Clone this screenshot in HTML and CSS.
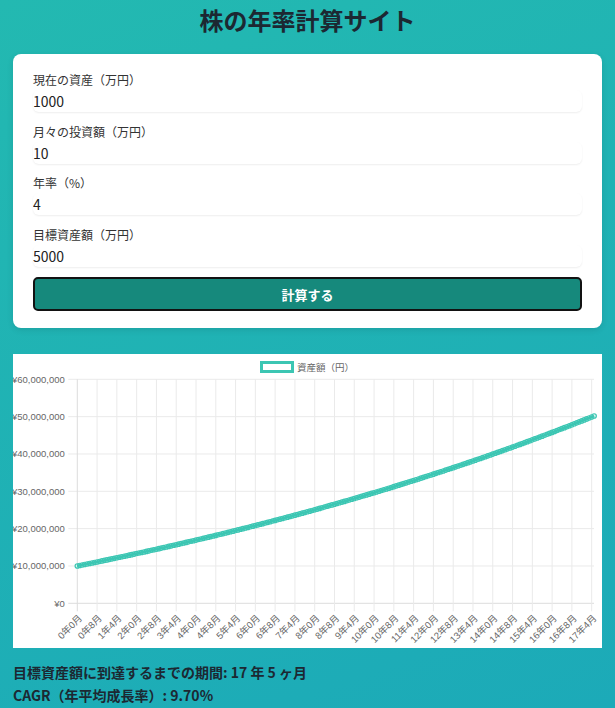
FILE: index.html
```html
<!DOCTYPE html>
<html lang="ja">
<head>
    <meta charset="UTF-8">
    <meta name="viewport" content="width=device-width, initial-scale=1.0">
    <title>株の年率計算サイト</title>
    <link rel="stylesheet" href="styles.css">
</head>
<body>
    <div class="page">
        <h1>株の年率計算サイト</h1>

        <form class="calc-card" id="calcForm">
            <div class="form-group">
                <label for="current">現在の資産（万円）</label>
                <input type="number" id="current" value="1000">
            </div>
            <div class="form-group">
                <label for="monthly">月々の投資額（万円）</label>
                <input type="number" id="monthly" value="10">
            </div>
            <div class="form-group">
                <label for="rate">年率（%）</label>
                <input type="number" id="rate" value="4">
            </div>
            <div class="form-group">
                <label for="target">目標資産額（万円）</label>
                <input type="number" id="target" value="5000">
            </div>
            <button type="submit" class="calc-button">計算する</button>
        </form>

        <div class="chart-box">
            <svg id="chart" width="589" height="294" viewBox="0 0 589 294"></svg>
        </div>

        <div class="result">
            <p id="period">目標資産額に到達するまでの期間: 17 年 5 ヶ月</p>
            <p id="cagr">CAGR（年平均成長率）: 9.70%</p>
        </div>
    </div>

    <script>
        document.addEventListener('DOMContentLoaded', function() {
            const svg = document.getElementById('chart');
            const NS = 'http://www.w3.org/2000/svg';

            // chart geometry
            const left = 64.3;
            const top = 25.3;
            const bottom = 249.3;
            const right = 581;
            const stepX = 2.473;
            const perTenMillion = 37.33;
            const lineColor = '#3cc6b3';

            function el(name, attrs, text) {
                const node = document.createElementNS(NS, name);
                for (const key in attrs) node.setAttribute(key, attrs[key]);
                if (text) node.textContent = text;
                svg.appendChild(node);
                return node;
            }

            // data: monthly compounding
            const values = [];
            let v = 10000000;
            const target = 50000000;
            while (true) {
                values.push(v);
                if (v >= target) break;
                v = v * (1 + 0.04 / 12) + 100000;
            }

            const yOf = val => bottom - val / 10000000 * perTenMillion;
            const xOf = m => left + m * stepX;

            // horizontal grid + y labels
            for (let i = 0; i <= 6; i++) {
                const y = bottom - i * perTenMillion;
                el('line', { x1: left - 9, x2: right, y1: y, y2: y, class: i === 0 ? 'axis' : 'grid' });
                const label = i === 0 ? '¥0' : '¥' + (i * 10000000).toLocaleString('en-US');
                el('text', { x: left - 12.5, y: y, class: 'tick', 'text-anchor': 'end', 'dominant-baseline': 'central' }, label);
            }

            // vertical grid + rotated x labels
            for (let m = 0; m < values.length; m += 8) {
                const x = xOf(m);
                el('line', { x1: x, x2: x, y1: top, y2: bottom + 8, class: m === 0 ? 'axis' : 'grid' });
                const label = Math.floor(m / 12) + '年' + (m % 12) + '月';
                el('text', {
                    class: 'tick',
                    'text-anchor': 'end',
                    'dominant-baseline': 'central',
                    transform: 'translate(' + (x + 3) + ',' + (bottom + 13) + ') rotate(-45)'
                }, label);
            }

            // legend
            el('rect', { x: 248.5, y: 8.5, width: 31, height: 9, fill: '#fff', stroke: lineColor, 'stroke-width': 3 });
            el('text', { x: 284, y: 13, class: 'legend', 'dominant-baseline': 'central' }, '資産額（円）');

            // data points and line
            values.forEach(function(val, m) {
                el('circle', { cx: xOf(m), cy: yOf(val), r: 2.2, fill: '#d8f3ef', stroke: lineColor, 'stroke-width': 1.2 });
            });
            const points = values.map((val, m) => xOf(m).toFixed(2) + ',' + yOf(val).toFixed(2)).join(' ');
            el('polyline', { points: points, fill: 'none', stroke: lineColor, 'stroke-width': 2.8, 'stroke-linejoin': 'round' });

            document.getElementById('calcForm').addEventListener('submit', function(e) {
                e.preventDefault();
            });
        });
    </script>
</body>
</html>
```

FILE: styles.css
```css
body {
    margin: 0;
    padding: 0;
    min-height: 100vh;
    font-family: "Noto Sans CJK JP", "Noto Sans", sans-serif;
    background: linear-gradient(160deg, #23b9b1 0%, #1caab8 100%);
    color: #1c2832;
}
.page {
    padding: 0 13px;
}
h1 {
    margin: 0 0 14px;
    font-size: 24px;
    line-height: 40px;
    text-align: center;
    color: #1c2832;
}
.calc-card {
    background-color: white;
    border-radius: 8px;
    padding: 17px 20px 17px;
    box-shadow: 0 2px 6px rgba(0, 0, 0, 0.1);
}
.form-group {
    margin-bottom: 10.5px;
}
label {
    display: block;
    font-size: 12px;
    line-height: 18px;
    margin-bottom: 1px;
    color: #333;
}
input[type="number"] {
    display: block;
    width: 100%;
    height: 22px;
    padding: 0;
    border: none;
    border-radius: 6px;
    box-sizing: border-box;
    font-family: inherit;
    font-size: 14px;
    color: #222;
    background: white;
    box-shadow: 0 1px 2px rgba(0, 0, 0, 0.07);
    outline: none;
    -moz-appearance: textfield;
}
input[type="number"]::-webkit-inner-spin-button,
input[type="number"]::-webkit-outer-spin-button {
    -webkit-appearance: none;
    margin: 0;
}
.calc-button {
    display: block;
    width: 100%;
    height: 34px;
    background-color: #16897c;
    border: 2px solid #121212;
    border-radius: 5px;
    color: white;
    font-family: inherit;
    font-size: 13px;
    font-weight: bold;
    cursor: pointer;
}
.chart-box {
    margin-top: 26px;
    height: 294px;
    background-color: white;
}
#chart {
    display: block;
}
#chart .grid {
    stroke: #eaeaea;
    stroke-width: 1;
}
#chart .axis {
    stroke: #dcdcdc;
    stroke-width: 1;
}
#chart .tick {
    font-family: "Liberation Sans", "Noto Sans CJK JP", sans-serif;
    font-size: 9.5px;
    fill: #666;
}
#chart .legend {
    font-family: "Noto Sans CJK JP", sans-serif;
    font-size: 9.5px;
    fill: #666;
}
.result {
    margin-top: 13px;
}
.result p {
    margin: 0;
    font-size: 14px;
    font-weight: bold;
    line-height: 22.5px;
}
```
